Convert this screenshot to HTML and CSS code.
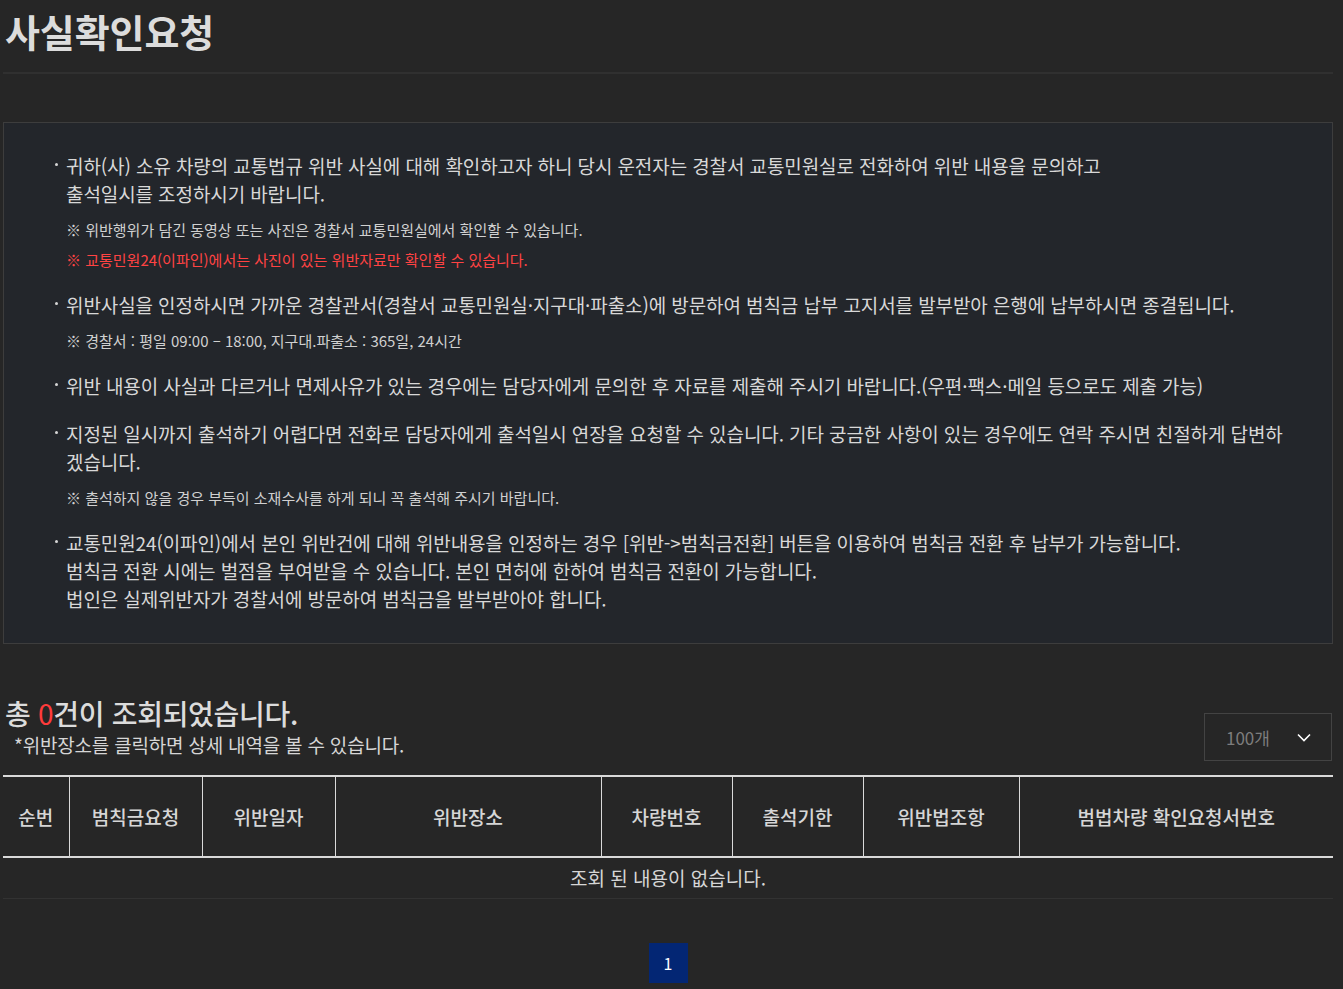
FILE: index.html
```html
<!DOCTYPE html>
<html lang="ko">
<head>
<meta charset="utf-8">
<title>사실확인요청</title>
<link rel="stylesheet" href="styles.css">
</head>
<body>
<div class="page">
  <header class="page-head">
    <h1 class="page-title">사실확인요청</h1>
  </header>

  <section class="info-box">
    <ul class="info-list">
      <li class="info-item">
        <p class="info-text">귀하(사) 소유 차량의 교통법규 위반 사실에 대해 확인하고자 하니 당시 운전자는 경찰서 교통민원실로 전화하여 위반 내용을 문의하고<br>출석일시를 조정하시기 바랍니다.</p>
        <div class="notes">
          <p class="note">※ 위반행위가 담긴 동영상 또는 사진은 경찰서 교통민원실에서 확인할 수 있습니다.</p>
          <p class="note note-red">※ 교통민원24(이파인)에서는 사진이 있는 위반자료만 확인할 수 있습니다.</p>
        </div>
      </li>
      <li class="info-item">
        <p class="info-text">위반사실을 인정하시면 가까운 경찰관서(경찰서 교통민원실·지구대·파출소)에 방문하여 범칙금 납부 고지서를 발부받아 은행에 납부하시면 종결됩니다.</p>
        <div class="notes">
          <p class="note">※ 경찰서 : 평일 09:00 – 18:00, 지구대.파출소 : 365일, 24시간</p>
        </div>
      </li>
      <li class="info-item">
        <p class="info-text">위반 내용이 사실과 다르거나 면제사유가 있는 경우에는 담당자에게 문의한 후 자료를 제출해 주시기 바랍니다.(우편·팩스·메일 등으로도 제출 가능)</p>
      </li>
      <li class="info-item">
        <p class="info-text">지정된 일시까지 출석하기 어렵다면 전화로 담당자에게 출석일시 연장을 요청할 수 있습니다. 기타 궁금한 사항이 있는 경우에도 연락 주시면 친절하게 답변하<br>겠습니다.</p>
        <div class="notes">
          <p class="note">※ 출석하지 않을 경우 부득이 소재수사를 하게 되니 꼭 출석해 주시기 바랍니다.</p>
        </div>
      </li>
      <li class="info-item">
        <p class="info-text">교통민원24(이파인)에서 본인 위반건에 대해 위반내용을 인정하는 경우 [위반-&gt;범칙금전환] 버튼을 이용하여 범칙금 전환 후 납부가 가능합니다.<br>범칙금 전환 시에는 벌점을 부여받을 수 있습니다. 본인 면허에 한하여 범칙금 전환이 가능합니다.<br>법인은 실제위반자가 경찰서에 방문하여 범칙금을 발부받아야 합니다.</p>
      </li>
    </ul>
  </section>

  <section class="results">
    <div class="results-head">
      <div class="results-summary">
        <h2 class="results-count">총 <span class="count-num">0</span>건이 조회되었습니다.</h2>
        <p class="results-hint">*위반장소를 클릭하면 상세 내역을 볼 수 있습니다.</p>
      </div>
      <div class="page-size">
        <span class="page-size-value">100개</span>
        <svg class="chevron" width="14" height="9" viewBox="0 0 14 9" aria-hidden="true"><path d="M1 1.5 L7 7.5 L13 1.5" fill="none" stroke="#ffffff" stroke-width="1.6"/></svg>
      </div>
    </div>

    <table class="result-table">
      <colgroup>
        <col class="c-no"><col class="c-req"><col class="c-date"><col class="c-place"><col class="c-car"><col class="c-due"><col class="c-law"><col class="c-docno">
      </colgroup>
      <thead>
        <tr>
          <th>순번</th>
          <th>범칙금요청</th>
          <th>위반일자</th>
          <th>위반장소</th>
          <th>차량번호</th>
          <th>출석기한</th>
          <th>위반법조항</th>
          <th>범법차량 확인요청서번호</th>
        </tr>
      </thead>
      <tbody>
        <tr>
          <td colspan="8" class="empty">조회 된 내용이 없습니다.</td>
        </tr>
      </tbody>
    </table>

    <nav class="pagination">
      <span class="page-btn is-current">1</span>
    </nav>
  </section>
</div>
</body>
</html>
```

FILE: styles.css
```css
* {
  box-sizing: border-box;
}

html, body {
  margin: 0;
  padding: 0;
  background: #262626;
}

body {
  font-family: "Noto Sans CJK KR", "Noto Sans", sans-serif;
  color: #d6d6d6;
}

.page {
  width: 1333px;
  padding-left: 3px;
}

.page-head {
  height: 74px;
  border-bottom: 2px solid #303030;
  padding-top: 6px;
}

.page-title {
  margin: 0;
  padding-left: 2px;
  font-size: 38px;
  line-height: 50px;
  font-weight: 700;
  color: #dcdcdc;
  letter-spacing: -0.1px;
}

.info-box {
  margin-top: 48px;
  background: #23262b;
  border: 1px solid #3d3d3d;
  padding: 29px 40px 30px 49px;
}

.info-list {
  list-style: none;
  margin: 0;
  padding: 0;
}

.info-item {
  position: relative;
  padding-left: 13px;
  margin-bottom: 20px;
}

.info-item:last-child {
  margin-bottom: 0;
}

.info-item::before {
  content: "";
  position: absolute;
  left: 2px;
  top: 11px;
  width: 3px;
  height: 3px;
  border-radius: 50%;
  background: #d6d6d6;
}

.info-text {
  margin: 0;
  font-size: 19px;
  line-height: 28px;
  letter-spacing: -0.1px;
  color: #d8d8d8;
}

.notes {
  margin-top: 7px;
  margin-bottom: -4px;
}

.note {
  margin: 0;
  font-size: 15px;
  line-height: 30px;
  letter-spacing: 0;
  color: #d0d0d0;
}

.note-red {
  color: #ff4343;
}

.results {
  margin-top: 50px;
}

.results-head {
  display: flex;
  justify-content: space-between;
  align-items: flex-end;
}

.results-count {
  margin: 0;
  padding-left: 2px;
  font-size: 28px;
  line-height: 38px;
  font-weight: 500;
  letter-spacing: -0.3px;
  color: #dcdcdc;
}

.count-num {
  color: #ff3b3b;
  font-weight: 400;
}

.results-hint {
  margin: 0;
  padding-left: 11px;
  font-size: 19px;
  line-height: 26px;
  letter-spacing: -0.2px;
  color: #d6d6d6;
}

.page-size {
  width: 128px;
  height: 48px;
  border: 1px solid #434343;
  display: flex;
  align-items: center;
  justify-content: space-between;
  padding: 0 20px 0 21px;
  margin-right: 1px;
  margin-bottom: -3px;
}

.page-size-value {
  font-size: 17px;
  color: #7d7d7d;
}

.result-table {
  width: 100%;
  margin-top: 17px;
  border-collapse: collapse;
  table-layout: fixed;
}

.c-no { width: 66px; }
.c-req { width: 133px; }
.c-date { width: 133px; }
.c-place { width: 266px; }
.c-car { width: 131px; }
.c-due { width: 131px; }
.c-law { width: 156px; }
.c-docno { width: auto; }

.result-table th {
  height: 81px;
  border-top: 2px solid #d9d9d9;
  border-bottom: 2px solid #d9d9d9;
  border-left: 1px solid #d9d9d9;
  font-size: 19px;
  font-weight: 500;
  color: #d6d6d6;
  text-align: center;
  padding: 0;
}

.result-table th:first-child {
  border-left: none;
}

.result-table td.empty {
  height: 41px;
  border-bottom: 1px solid #323232;
  font-size: 19px;
  color: #d6d6d6;
  text-align: center;
  padding: 0;
}

.pagination {
  display: flex;
  justify-content: center;
  margin-top: 44px;
}

.page-btn {
  width: 39px;
  height: 40px;
  display: flex;
  align-items: center;
  justify-content: center;
  font-size: 16px;
  color: #ffffff;
}

.page-btn.is-current {
  background: #032674;
}
```
